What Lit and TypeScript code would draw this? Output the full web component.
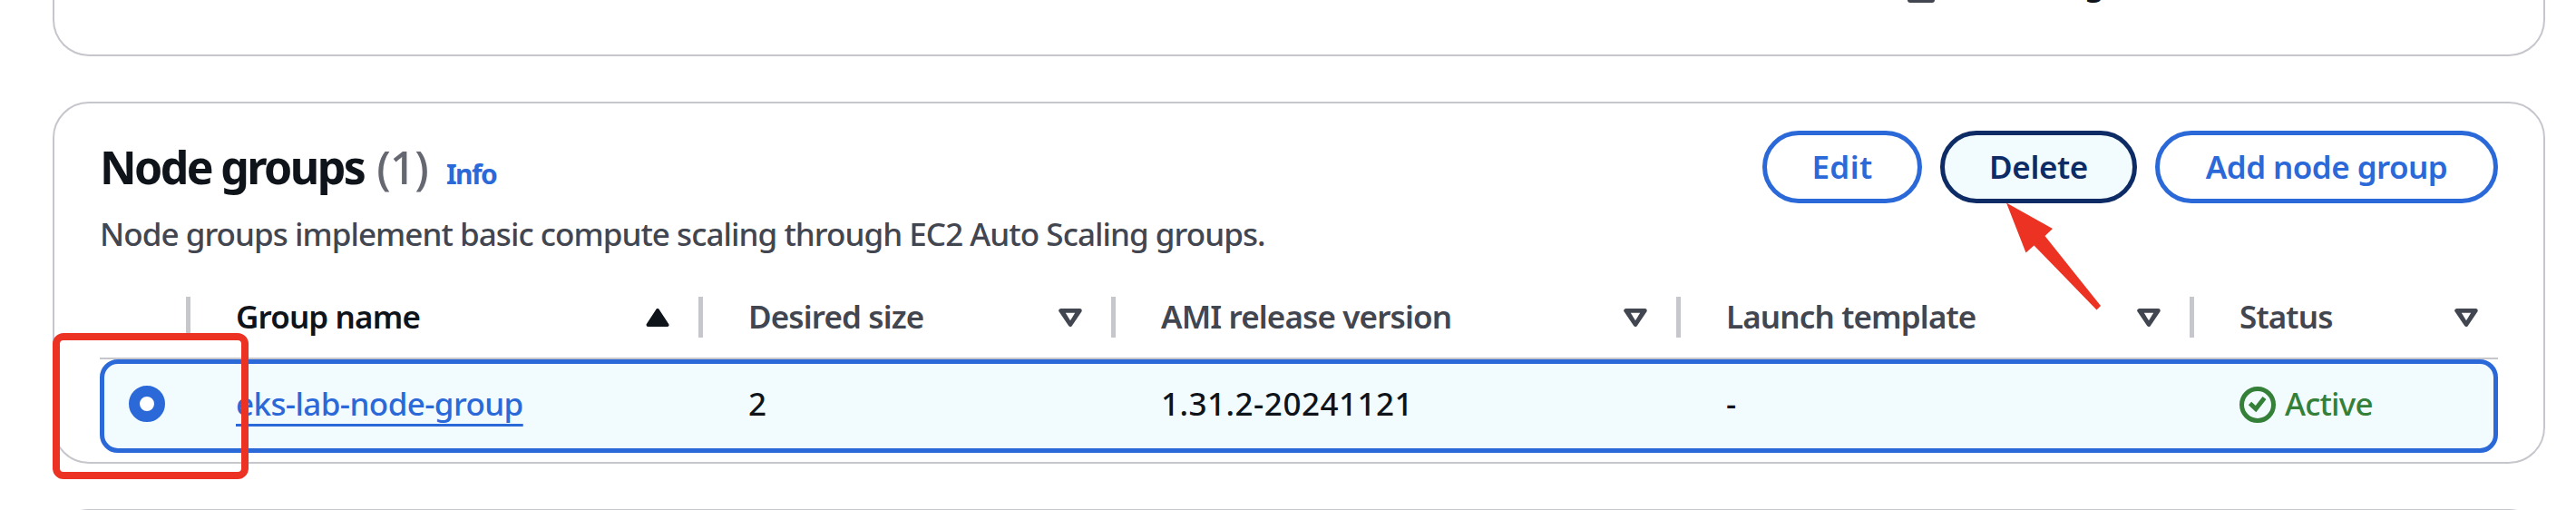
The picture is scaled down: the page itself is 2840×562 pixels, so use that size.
import { LitElement, html, css, svg } from "lit";
import { customElement } from "lit/decorators.js";

interface Column { label: string; value: string; sort: "asc" | "none"; kind: "link" | "version" | "plain" | "status"; width: number; }

const columns: Column[] = [
  { label: "Group name", value: "eks-lab-node-group", sort: "asc", kind: "link", width: 565 },
  { label: "Desired size", value: "2", sort: "none", kind: "plain", width: 455 },
  { label: "AMI release version", value: "1.31.2-20241121", sort: "none", kind: "version", width: 623 },
  { label: "Launch template", value: "-", sort: "none", kind: "plain", width: 566 },
  { label: "Status", value: "Active", sort: "none", kind: "status", width: 340 },
];

@customElement("app-root")
export class AppRoot extends LitElement {
  static styles = css`
    :host { display: block; height: 562px; overflow: hidden; position: relative; background: #fff; color: #0f141a;
      font: 500 35px/50px "Noto Sans", "Open Sans", sans-serif; }
    * { box-sizing: border-box; }
    .page { display: flex; flex-direction: column; gap: 50px; padding: 0 34px 0 58px; height: 562px; overflow: hidden; }
    .card { border: 2px solid #c6c6cd; border-radius: 40px; background: #fff; flex: none; }
    .previous { height: 62px; border-top: 0; border-radius: 0 0 40px 40px; padding-left: 2043px; display: flex; overflow: hidden; }
    .box { width: 30px; height: 3px; background: #424650; border-radius: 0 0 3px 3px; }
    .clip { margin: -43px 0 0 165px; font-weight: 600; }
    .nodes { height: 399px; padding: 30px 50px 0; }
    .next { height: 100px; }
    .header { display: flex; justify-content: space-between; height: 81px; }
    .title { display: flex; align-items: baseline; white-space: nowrap; line-height: 80px; }
    h2 { margin: 0; font-size: 50px; font-weight: 700; letter-spacing: -2.6px; line-height: 80px; }
    .count { font-size: 50px; color: #656871; margin-left: 14px; letter-spacing: -1px; }
    .info { font-size: 30px; font-weight: 700; color: #2b69d9; margin-left: 20px; letter-spacing: -1.6px; }
    .actions { display: flex; gap: 20px; }
    button { height: 80px; border: 5px solid #2b69d9; border-radius: 40px; background: #fff; color: #2b69d9;
      font: 600 35px/50px "Noto Sans", sans-serif; padding: 0 0 1px; white-space: nowrap; }
    .edit { width: 176px; letter-spacing: 0.4px; }
    .delete { width: 217px; color: #0d2c66; border-color: #0d2c66; background: #f2fcff; letter-spacing: -0.4px; }
    .add { width: 378px; letter-spacing: -0.55px; }
    .description { color: #424650; height: 51px; margin-top: 8px; white-space: nowrap; letter-spacing: -0.95px; }
    .heads { display: flex; height: 112px; border-bottom: 2px solid #c6c6cd; padding-top: 43px; }
    .pick { width: 95px; flex: none; }
    .head { display: flex; height: 45px; border-left: 5px solid #c6c6cd; padding: 0 32px 0 50px; justify-content: space-between; align-items: center;
      flex: none; font-weight: 600; color: #424650; white-space: nowrap; letter-spacing: -0.87px; }
    .head:last-child { padding-right: 22px; }
    .head span { padding-bottom: 2px; }
    .head.asc { color: #0f141a; }
    .row { display: flex; height: 103px; border: 5px solid #2b69d9; border-radius: 20px; background: #f2fcff; align-items: flex-start; }
    .pickcell { width: 145px; flex: none; padding: 24px 0 0 27px; display: flex; }
    .radio { width: 40px; height: 40px; border: 12px solid #2b69d9; border-radius: 50%; background: #fff; }
    .cell { flex: none; white-space: nowrap; display: flex; padding-top: 19px; }
    .cell:last-child { width: 285px; }
    .link { color: #2b69d9; letter-spacing: -0.6px; text-decoration: underline 3px; text-underline-offset: 9px; text-decoration-skip-ink: none; }
    .version { letter-spacing: 0.5px; }
    .status { color: #348039; gap: 10px; letter-spacing: -0.8px; display: flex; }
    .status svg { margin-top: 6px; }
    svg { display: block; flex: none; }
    .mark { position: absolute; left: 58px; top: 367px; width: 216px; height: 161px; border: 8px solid #ec3323; border-radius: 12px; }
    .arrow { position: absolute; left: 2200px; top: 215px; }
  `;

  sortIcon(kind: string) {
    return svg`<svg width="26" height="20" viewBox="0 0 26 20">${kind === "asc"
      ? svg`<path d="M13 2 L23.500 18 H2.500 Z" fill="#0f141a" stroke="#0f141a" stroke-width="4" stroke-linejoin="round"/>`
      : svg`<path d="M2.500 2.300 H23.500 L13 17.700 Z" fill="#424650" stroke="#424650" stroke-width="4.500" stroke-linejoin="round"/><path d="M7.800 4.800 H18.200 L13 13.300 Z" fill="#fff"/>`}</svg>`;
  }

  cell(c: Column) {
    if (c.kind === "status") return html`<span class="status"><svg width="40" height="40" viewBox="0 0 40 40" fill="none" stroke="#348039" stroke-width="5"><circle cx="20" cy="20" r="17.5"/><path d="M11.500 18.500 L18 24.500 L27.500 12.500"/></svg><span>${c.value}</span></span>`;
    return html`<span class=${c.kind}>${c.value}</span>`;
  }

  render() {
    return html`
      <div class="page">
        <section class="card previous"><span class="box"></span><span class="clip">g</span></section>
        <section class="card nodes">
          <div class="header">
            <div class="title"><h2>Node groups</h2><span class="count">(1)</span><span class="info">Info</span></div>
            <div class="actions"><button class="edit">Edit</button><button class="delete">Delete</button><button class="add">Add node group</button></div>
          </div>
          <div class="description">Node groups implement basic compute scaling through EC2 Auto Scaling groups.</div>
          <div class="heads"><span class="pick"></span>${columns.map((c) => html`<div class="head ${c.sort}" style="width:${c.width}px"><span>${c.label}</span>${this.sortIcon(c.sort)}</div>`)}</div>
          <div class="row"><div class="pickcell"><span class="radio"></span></div>${columns.map((c) => html`<div class="cell" style="width:${c.width}px">${this.cell(c)}</div>`)}</div>
        </section>
        <section class="card next"></section>
      </div>
      <div class="mark"></div>
      <svg class="arrow" width="130" height="130" viewBox="0 0 130 130"><path d="M12 8.500 L63 37 L54.500 45 L116 122 L111.500 126.500 L42.500 55.500 L33.500 63.500 Z" fill="#ec3323"/></svg>
    `;
  }
}
